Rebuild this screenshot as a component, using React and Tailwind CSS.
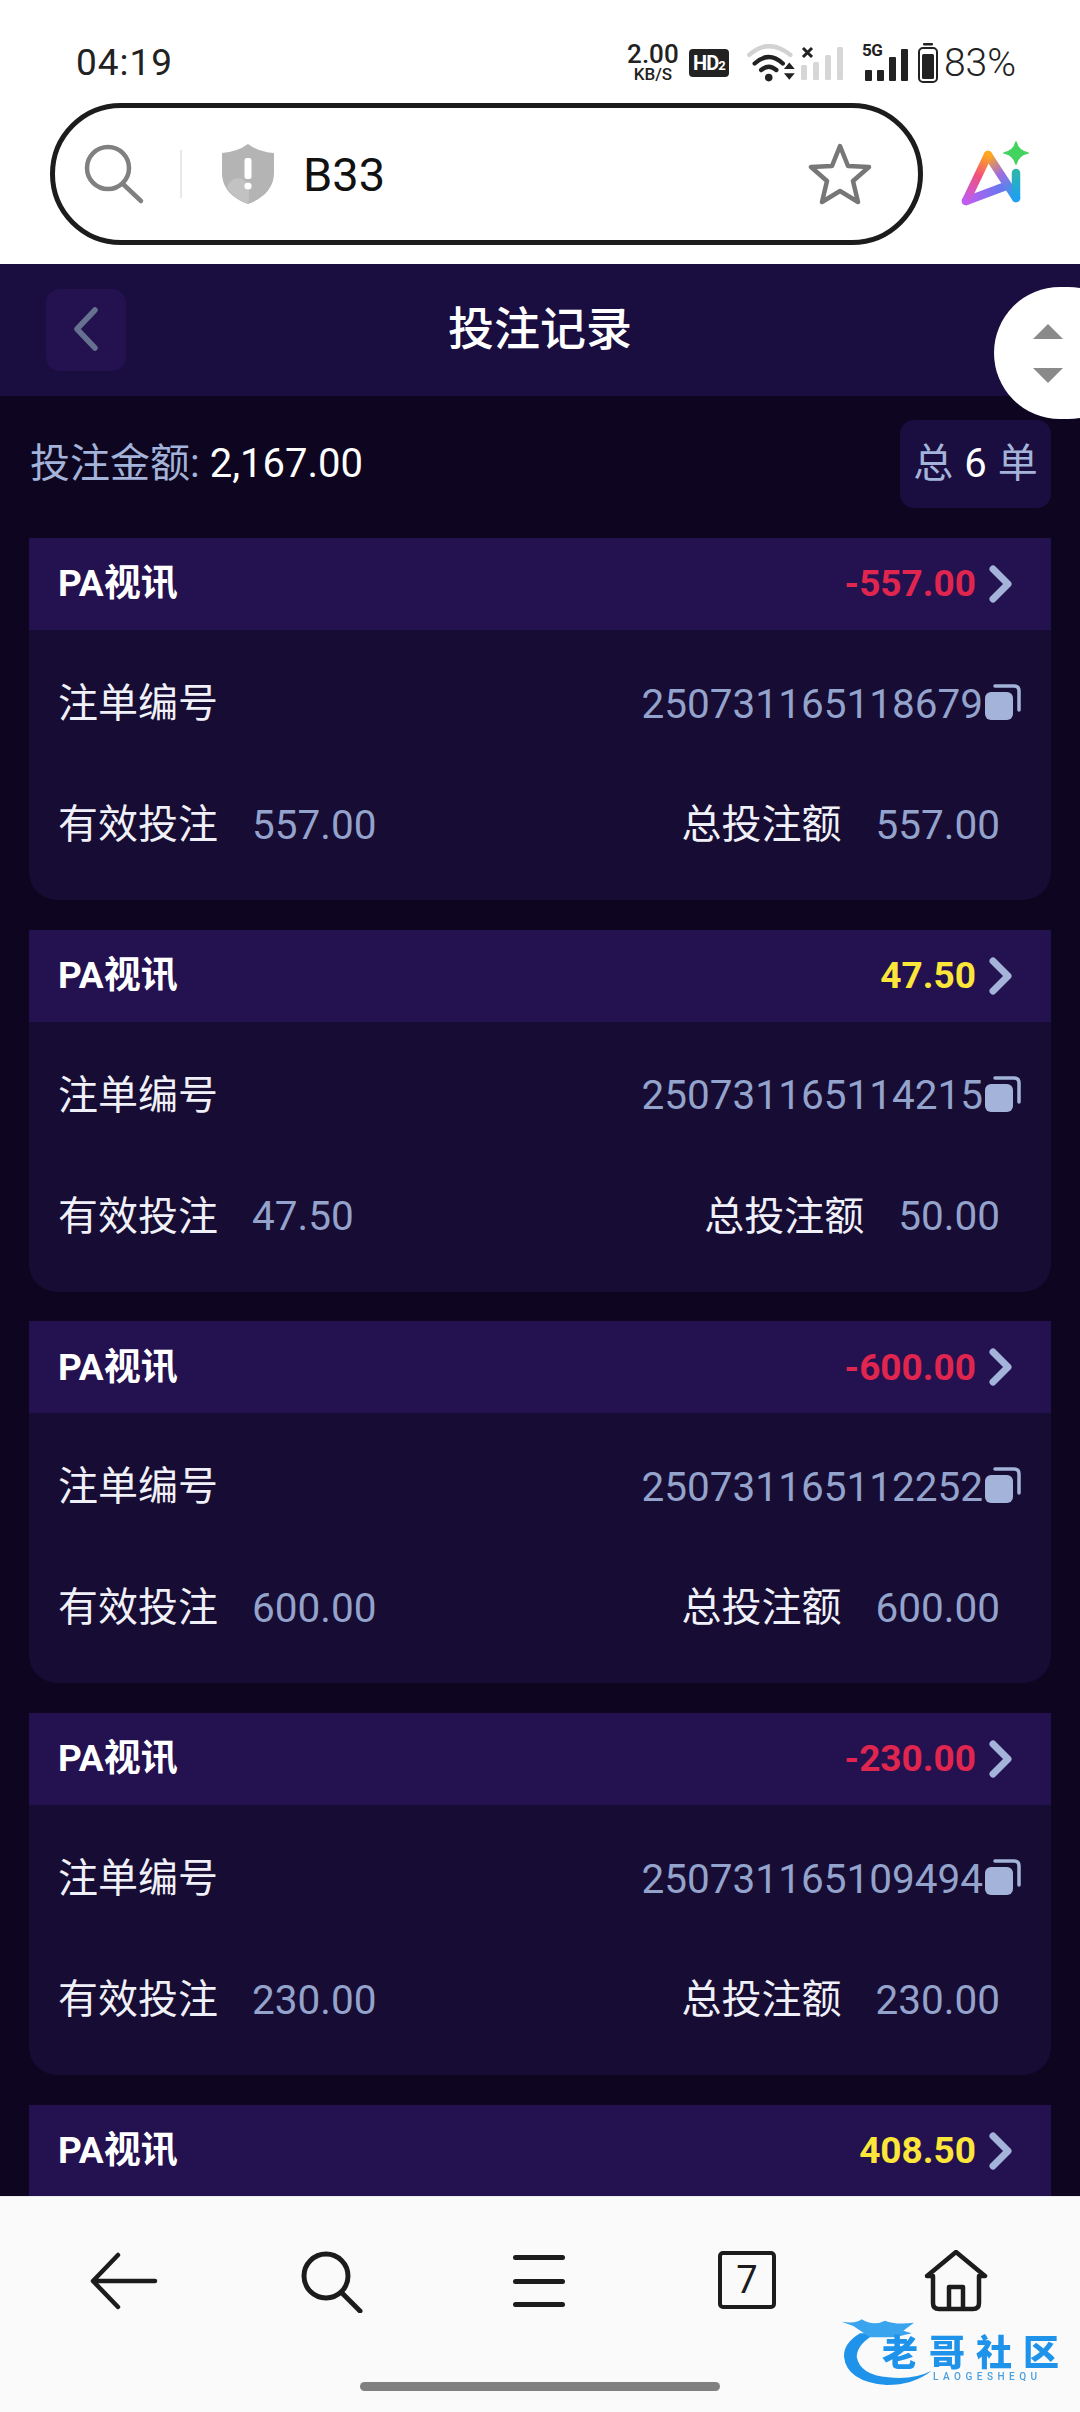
import React from "react";

const font = { fontFamily: '"Roboto", "Noto Sans CJK SC", sans-serif' };

const records = [
  { amount: "-557.00", color: "text-[#e0264f]", no: "250731165118679", valid: "557.00", total: "557.00" },
  { amount: "47.50", color: "text-[#fce63a]", no: "250731165114215", valid: "47.50", total: "50.00" },
  { amount: "-600.00", color: "text-[#e0264f]", no: "250731165112252", valid: "600.00", total: "600.00" },
  { amount: "-230.00", color: "text-[#e0264f]", no: "250731165109494", valid: "230.00", total: "230.00" },
];

function StatusBar() {
  return (
    <div className="h-[103px] flex items-start justify-between pl-[76px] pr-[64px] pt-[41px] bg-white text-[#222]">
      <span className="text-[37px] leading-[44px] tracking-[1px]">04:19</span>
      <div className="flex items-center h-[44px]">
        <div className="flex flex-col items-center w-[54px] font-medium">
          <span className="text-[26px] leading-[23px]">2.00</span>
          <span className="text-[17px] leading-[17px]">KB/S</span>
        </div>
        <div className="ml-[9px] w-[40px] h-[28px] rounded-[4px] bg-[#222] text-white text-[20px] leading-[28px] font-bold text-center tracking-[-1px]">
          HD<span className="text-[13px]">2</span>
        </div>
        <svg className="ml-[18px]" width="50" height="39" viewBox="0 0 46 36">
          <path d="M2 10 Q20 -6 40 10" fill="none" stroke="#d2d2d2" strokeWidth="4" strokeLinecap="round" />
          <path d="M7 18 Q20 6 33 18" fill="none" stroke="#222" strokeWidth="4" strokeLinecap="round" />
          <path d="M13 24 Q20 18 27 24" fill="none" stroke="#222" strokeWidth="4" strokeLinecap="round" />
          <circle cx="20" cy="31" r="3.5" fill="#222" />
          <path d="M34 23 L39 17 L44 23 Z M34 27 L44 27 L39 33 Z" fill="#222" />
        </svg>
        <svg className="ml-[3px]" width="44" height="36" viewBox="0 0 44 36">
          <path d="M3 3 L12 12 M12 3 L3 12" stroke="#222" strokeWidth="3" />
          <rect x="1" y="20" width="6" height="15" rx="1.5" fill="#d6d6d6" />
          <rect x="13" y="17" width="6" height="18" rx="1.5" fill="#d6d6d6" />
          <rect x="25" y="10" width="6" height="25" rx="1.5" fill="#d6d6d6" />
          <rect x="37" y="2" width="6" height="33" rx="1.5" fill="#d6d6d6" />
        </svg>
        <div className="relative ml-[18px] w-[46px] h-[36px]">
          <span className="absolute left-0 top-[-3px] text-[17px] leading-[17px] font-bold tracking-[-0.5px]">5G</span>
          <div className="absolute inset-0 flex items-end justify-end gap-[5px]">
            <div className="w-[7px] h-[11px] rounded-[1px] bg-[#222]" />
            <div className="w-[7px] h-[11px] rounded-[1px] bg-[#222]" />
            <div className="w-[7px] h-[24px] rounded-[1px] bg-[#222]" />
            <div className="w-[7px] h-[32px] rounded-[1px] bg-[#222]" />
          </div>
        </div>
        <svg className="ml-[10px]" width="20" height="40" viewBox="0 0 20 40">
          <rect x="5" y="0" width="10" height="2.5" rx="1" fill="#222" />
          <rect x="1" y="5" width="18" height="34" rx="4" fill="none" stroke="#222" strokeWidth="2" />
          <rect x="4" y="11" width="12" height="25" rx="1.5" fill="#222" />
        </svg>
        <span className="ml-[6px] text-[39px] leading-[44px] font-light">83%</span>
      </div>
    </div>
  );
}

function AddressBar() {
  return (
    <div className="h-[161px] bg-white flex items-start pl-[50px]">
      <div className="w-[873px] h-[142px] rounded-[71px] border-[5px] border-[#1c1c1c] flex items-center pl-[28px] pr-[46px]">
        <svg width="62" height="62" viewBox="0 0 62 62" fill="none" stroke="#808080" strokeWidth="4.5" strokeLinecap="round">
          <circle cx="25" cy="25" r="21" />
          <path d="M40 41 L58 58" />
        </svg>
        <div className="ml-[35px] w-[2px] h-[48px] bg-[#e8e8e8]" />
        <svg className="ml-[37px]" width="58" height="62" viewBox="0 0 56 62">
          <path d="M28 1 Q39 9 54 10 V30 C54 46 42 56 28 61 C14 56 2 46 2 30 V10 Q17 9 28 1 Z" fill="#b4b4b4" />
          <path d="M28 61 C20 58 11 52 7 44 C10 36 18 33 24 37 C30 42 30 52 28 61 Z" fill="#c2c2c2" />
          <rect x="24.5" y="15" width="7" height="21" rx="2.5" fill="#fff" />
          <circle cx="28" cy="43" r="3.6" fill="#fff" />
        </svg>
        <span className="ml-[26px] flex-1 text-[47px] leading-none text-[#111]">B33</span>
        <svg width="64" height="62" viewBox="0 0 64 62" fill="none" stroke="#777" strokeWidth="4.5" strokeLinejoin="round">
          <path d="M32 3 L40 23 L61 24 L45 38 L50 59 L32 48 L14 59 L19 38 L3 24 L24 23 Z" />
        </svg>
      </div>
      <svg className="ml-[17px] mt-[27px]" width="100" height="90" viewBox="0 0 100 90" fill="none" strokeWidth="8.5" strokeLinecap="round" strokeLinejoin="round">
        <defs>
          <linearGradient id="aiLeft" gradientUnits="userSpaceOnUse" x1="26" y1="71" x2="48" y2="25">
            <stop offset="0" stopColor="#c05cf0" />
            <stop offset="0.55" stopColor="#f0507c" />
            <stop offset="1" stopColor="#ffa81c" />
          </linearGradient>
          <linearGradient id="aiRight" gradientUnits="userSpaceOnUse" x1="48" y1="25" x2="76" y2="68">
            <stop offset="0" stopColor="#ffa81c" />
            <stop offset="0.45" stopColor="#9c6ce0" />
            <stop offset="1" stopColor="#1fa0f0" />
          </linearGradient>
          <linearGradient id="aiBar" gradientUnits="userSpaceOnUse" x1="26" y1="71" x2="66" y2="56">
            <stop offset="0" stopColor="#c05cf0" />
            <stop offset="1" stopColor="#5c7cf0" />
          </linearGradient>
          <linearGradient id="aiStem" gradientUnits="userSpaceOnUse" x1="76" y1="43" x2="76" y2="68">
            <stop offset="0" stopColor="#2cb5b0" />
            <stop offset="1" stopColor="#1fa0f0" />
          </linearGradient>
        </defs>
        <path d="M26 71 L66 56" stroke="url(#aiBar)" />
        <path d="M48 25 L76 68" stroke="url(#aiRight)" />
        <path d="M26 71 L48 25" stroke="url(#aiLeft)" />
        <path d="M76 43 V68" stroke="url(#aiStem)" />
        <path d="M76 12 Q78 21 88 23 Q78 25 76 34 Q74 25 64 23 Q74 21 76 12 Z" fill="#43d35f" stroke="#43d35f" strokeWidth="1.5" />
      </svg>
    </div>
  );
}

function CopyIcon() {
  return (
    <svg className="ml-[2px] mb-[4px]" width="36" height="36" viewBox="0 0 36 36">
      <path d="M10 2 H29 Q34 2 34 7 V26" fill="none" stroke="#a3b3d9" strokeWidth="3.5" strokeLinecap="round" />
      <rect x="0" y="8" width="28" height="28" rx="6" fill="#a3b3d9" />
    </svg>
  );
}

function CardHeader({ amount, color }) {
  return (
    <div className="h-[92px] shrink-0 bg-[#241150] flex items-center justify-between pl-[29px] pr-[38px]">
      <span className="text-[37px] font-bold text-white">PA视讯</span>
      <div className="flex items-center">
        <span className={`text-[37px] font-bold ${color}`}>{amount}</span>
        <svg className="ml-[13px]" width="24" height="38" viewBox="0 0 24 38" fill="none" stroke="#a3b3d9" strokeWidth="7" strokeLinecap="round" strokeLinejoin="round">
          <path d="M4 4 L19 19 L4 34" />
        </svg>
      </div>
    </div>
  );
}

function RecordCard({ record }) {
  return (
    <div className="rounded-b-[28px] bg-[#170c33] overflow-hidden">
      <CardHeader amount={record.amount} color={record.color} />
      <div className="h-[270px] pl-[29px] pr-[30px] pt-[44px]">
        <div className="flex items-center justify-between h-[60px]">
          <span className="text-[40px] text-[#f0f0f8]">注单编号</span>
          <div className="flex items-center">
            <span className="text-[40.5px] text-[#93a3cc]">{record.no}</span>
            <CopyIcon />
          </div>
        </div>
        <div className="flex items-center justify-between h-[60px] mt-[61px] pr-[21px]">
          <div className="flex items-center gap-[34px]">
            <span className="text-[40px] text-[#f0f0f8]">有效投注</span>
            <span className="text-[40.5px] text-[#93a3cc]">{record.valid}</span>
          </div>
          <div className="flex items-center gap-[34px]">
            <span className="text-[40px] text-[#f0f0f8]">总投注额</span>
            <span className="text-[40.5px] text-[#93a3cc]">{record.total}</span>
          </div>
        </div>
      </div>
    </div>
  );
}

function BottomNav() {
  return (
    <div className="relative h-[216px] shrink-0 bg-[#fafafa] border-t border-[#ecebf2]">
      <div className="flex items-start pl-[90px] pt-[54px]">
        <svg width="68" height="60" viewBox="0 0 68 60" fill="none" stroke="#1c1c1c" strokeWidth="4.5" strokeLinecap="round" strokeLinejoin="round">
          <path d="M28 4 L3 30 L28 56 M3 30 H65" />
        </svg>
        <svg className="ml-[143px]" width="62" height="62" viewBox="0 0 62 62" fill="none" stroke="#1c1c1c" strokeWidth="5" strokeLinecap="round">
          <circle cx="25" cy="25" r="22" />
          <path d="M41 42 L59 60" />
        </svg>
        <svg className="ml-[149px] mt-[2px]" width="54" height="56" viewBox="0 0 54 56" fill="#1c1c1c">
          <rect x="1" y="2" width="52" height="5" rx="2.5" />
          <rect x="1" y="26" width="52" height="5" rx="2.5" />
          <rect x="1" y="49" width="52" height="5" rx="2.5" />
        </svg>
        <div className="ml-[152px] w-[58px] h-[58px] rounded-[5px] border-[4px] border-[#1c1c1c] flex items-center justify-center text-[38px] leading-none text-[#1c1c1c]">
          7
        </div>
        <svg className="ml-[148px] -mt-[1px]" width="64" height="62" viewBox="0 0 64 62" fill="none" stroke="#1c1c1c" strokeWidth="4.5" strokeLinecap="round" strokeLinejoin="round">
          <path d="M9 26 H3 L32 2 L61 26 H55 M9 26 V53 Q9 59 15 59 H49 Q55 59 55 53 V26 M25 59 V37 H39 V59" />
        </svg>
      </div>
      {/* watermark */}
      <div className="absolute left-[820px] top-[103px] w-[260px] h-[109px] blur-[0.6px]">
        <svg className="absolute left-0 top-0" width="260" height="112" viewBox="0 0 780 336" fill="none">
          <path d="M120 100 Q70 130 72 170 Q80 245 200 255 Q280 255 335 212 Q280 240 205 232 Q120 225 110 170 Q112 130 170 100 Z" fill="#1f93ea" />
          <path d="M65 65 Q110 72 125 58 Q160 80 195 62 Q225 75 282 68 L250 92 L275 100 L225 112 L150 112 Q125 95 100 78 Z" fill="#3ba4ee" />
        </svg>
        <span className="absolute left-[62px] top-[36px] text-[36px] leading-[36px] font-black tracking-[11px] text-[#1f93ea] whitespace-nowrap">老哥社区</span>
        <span className="absolute left-[113px] top-[72px] text-[10px] leading-[10px] font-medium tracking-[4.5px] text-[#4a9fe0] whitespace-nowrap">LAOGESHEQU</span>
      </div>
      <div className="absolute left-[360px] top-[185px] w-[360px] h-[9px] rounded-full bg-[#808080]" />
    </div>
  );
}

export default function App() {
  return (
    <div className="relative w-[1080px] h-[2412px] overflow-hidden flex flex-col bg-[#0e0620]" style={font}>
      <StatusBar />
      <AddressBar />

      <div className="h-[132px] shrink-0 bg-[#1a0d3f] flex items-center justify-center relative pb-[2px]">
        <div className="absolute left-[46px] top-[25px] w-[80px] h-[82px] rounded-[14px] bg-[#241150] flex items-center justify-center pb-[2px]">
          <svg width="26" height="44" viewBox="0 0 26 44" fill="none" stroke="#66708f" strokeWidth="5.5" strokeLinecap="round" strokeLinejoin="round">
            <path d="M22 3 L4 22 L22 41" />
          </svg>
        </div>
        <span className="text-[46px] font-medium text-white">投注记录</span>
      </div>

      {/* scroll up/down float */}
      <div className="absolute left-[994px] top-[287px] w-[140px] h-[132px] rounded-full bg-white flex flex-col items-center pr-[32px] pt-[37px] gap-[29px]">
        <div className="w-0 h-0 border-l-[15px] border-r-[15px] border-b-[15px] border-l-transparent border-r-transparent border-b-[#8a8a8a]" />
        <div className="w-0 h-0 border-l-[15px] border-r-[15px] border-t-[15px] border-l-transparent border-r-transparent border-t-[#8a8a8a]" />
      </div>

      <div className="flex-1 overflow-hidden">
        <div className="h-[142px] pl-[30px] pr-[29px] pt-[24px] flex items-start justify-between">
          <div className="h-[88px] flex items-center text-[40px]">
            <span className="text-[#a3b3d9]">投注金额:</span>
            <span className="ml-[10px] text-white">2,167.00</span>
          </div>
          <div className="w-[151px] h-[88px] rounded-[14px] bg-[#1a0d3f] flex items-center justify-center text-[40px] text-[#a3b3d9]">
            总<span className="mx-[11px] text-white">6</span>单
          </div>
        </div>

        <div className="ml-[29px] w-[1022px] flex flex-col gap-[29.7px]">
          {records.map((r) => (
            <RecordCard key={r.no} record={r} />
          ))}
          <CardHeader amount="408.50" color="text-[#fce63a]" />
        </div>
      </div>

      <BottomNav />
    </div>
  );
}
